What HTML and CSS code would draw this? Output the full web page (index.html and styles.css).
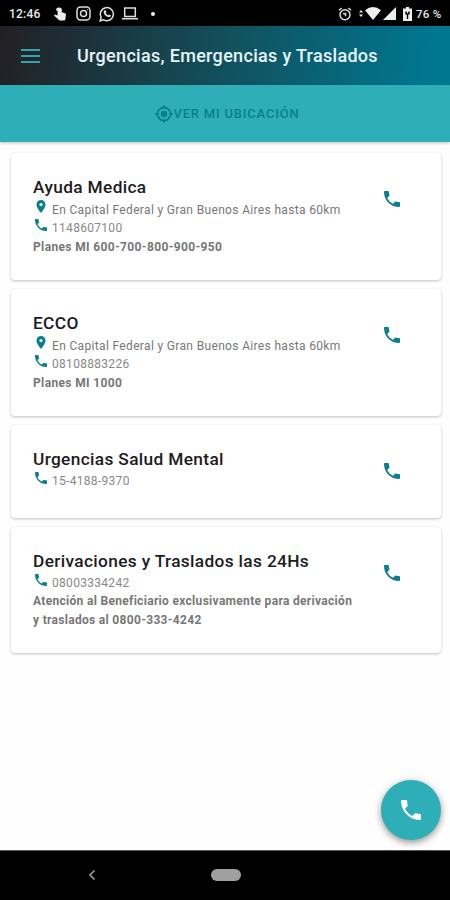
FILE: index.html
```html
<!DOCTYPE html>
<html lang="es">
<head>
  <meta charset="UTF-8">
  <meta name="viewport" content="width=device-width, initial-scale=1">
  <title>Urgencias, Emergencias y Traslados</title>
  <link rel="stylesheet" href="styles.css">
</head>
<body>

<svg class="defs">
  <symbol id="phone" viewBox="3 3 18 18"><path d="M6.620 10.790c1.440 2.830 3.760 5.140 6.590 6.590l2.200-2.200c.27-.27.67-.36 1.020-.24 1.120.37 2.330.57 3.570.57.55 0 1 .45 1 1V20c0 .55-.45 1-1 1-9.390 0-17-7.610-17-17 0-.55.45-1 1-1h3.500c.55 0 1 .45 1 1 0 1.250.2 2.450.57 3.570.11.35.03.74-.25 1.020l-2.200 2.200z"/></symbol>
  <symbol id="pin" viewBox="5 2 14 20"><path fill-rule="evenodd" d="M12 2C8.130 2 5 5.130 5 9c0 5.250 7 13 7 13s7-7.750 7-13c0-3.870-3.130-7-7-7zm0 9.500a2.500 2.500 0 1 1 0-5 2.500 2.500 0 0 1 0 5z"/></symbol>
</svg>

<div class="status">
  <span class="clock">12:46</span>
  <svg class="st-touch" viewBox="0 0 13 15"><path d="M3 4.500a3 3 0 1 1 6 0l-.5 1.500 4 1.600c.5.3.5.8.4 1.400l-.6 4.500q-.2 1-1.300 1H6.500L1 9.500l1-.9 2.500.9V4.500z"/></svg>
  <svg class="st-insta line" viewBox="0 0 15 15"><rect x="1" y="1" width="13" height="13" rx="3.500"/><circle cx="7.500" cy="7.500" r="3"/><path d="M11 3.800h.6"/></svg>
  <svg class="st-wsp line" viewBox="0 0 16 16"><path d="M1.200 14.800l1-3.500a6.500 6.500 0 1 1 2.500 2.500z"/><path class="fill" d="M5.500 4.200l1.200.2.800 1.800-.7 1q.8 1.500 2.300 2.100l.9-.9 1.900.9q-.1 2-2.100 2Q5.200 10.200 4.600 6.300q0-1.300.9-2.100z"/></svg>
  <svg class="st-laptop line" viewBox="0 0 16 13"><path d="M2.700 1h10.600v8.600H2.700zM0 11.800h16"/></svg>
  <i class="dot"></i>
  <svg class="st-alarm line" viewBox="0 0 14 14"><circle cx="7" cy="7.800" r="5"/><path d="M1 3.200L3.600 1M13 3.200L10.400 1M5 6.500l2.500.2v2.600"/></svg>
  <svg class="st-data" viewBox="0 0 5 9"><path d="M2.500 0L5 3.300H0zM2.500 9L0 5.700h5z"/></svg>
  <svg class="st-wifi" viewBox="0 0 16 13"><path d="M0 3.200Q8-3 16 3.200L8 13z"/></svg>
  <svg class="st-signal" viewBox="0 0 13 13"><path d="M13 0v13H0z"/></svg>
  <svg class="st-battery" viewBox="0 0 9 14"><path fill-rule="evenodd" d="M3 0h3v1.500h3V14H0V1.500h3zM2.300 4.500v3h1.500V12h1.400V7.500h1.500v-3H5.200v1.700H3.800V4.500z"/></svg>
  <span class="percent">76 %</span>
</div>

<header class="toolbar">
  <div class="menu"><i></i><i></i><i></i></div>
  <h1>Urgencias, Emergencias y Traslados</h1>
</header>

<div class="location">
  <svg viewBox="0 0 18 18"><circle cx="9" cy="9" r="6.500"/><circle class="center" cx="9" cy="9" r="3.200"/><path d="M9 .3v2M9 15.700v2M.3 9h2M15.700 9h2"/></svg>
  <span>VER MI UBICACIÓN</span>
</div>

<main class="list">
  <div class="card">
    <div class="info">
      <h2>Ayuda Medica</h2>
      <p class="place"><svg class="pin"><use href="#pin"/></svg><span class="address">En Capital Federal y Gran Buenos Aires hasta 60km</span></p>
      <p><svg class="tel"><use href="#phone"/></svg><span class="number">1148607100</span></p>
      <p class="note plans">Planes MI 600-700-800-900-950</p>
    </div>
    <svg class="call"><use href="#phone"/></svg>
  </div>
  <div class="card">
    <div class="info">
      <h2>ECCO</h2>
      <p class="place"><svg class="pin"><use href="#pin"/></svg><span class="address">En Capital Federal y Gran Buenos Aires hasta 60km</span></p>
      <p><svg class="tel"><use href="#phone"/></svg><span class="number">08108883226</span></p>
      <p class="note plans">Planes MI 1000</p>
    </div>
    <svg class="call"><use href="#phone"/></svg>
  </div>
  <div class="card">
    <div class="info">
      <h2>Urgencias Salud Mental</h2>
      <p><svg class="tel"><use href="#phone"/></svg><span class="number">15-4188-9370</span></p>
    </div>
    <svg class="call"><use href="#phone"/></svg>
  </div>
  <div class="card">
    <div class="info">
      <h2>Derivaciones y Traslados las 24Hs</h2>
      <p><svg class="tel"><use href="#phone"/></svg><span class="number">08003334242</span></p>
      <p class="note">Atención al Beneficiario exclusivamente para derivación<br>y traslados al 0800-333-4242</p>
    </div>
    <svg class="call"><use href="#phone"/></svg>
  </div>
</main>

<div class="fab"><svg><use href="#phone"/></svg></div>

<footer class="navbar">
  <svg viewBox="0 0 8 12"><path d="M6.500 1.500L2 6l4.500 4.500"/></svg>
  <i class="home"></i>
</footer>

</body>
</html>
```

FILE: styles.css
```css
* { box-sizing: border-box; }
body { margin: 0; height: 900px; display: flex; flex-direction: column; font-family: Roboto, sans-serif; background: #fefefe; overflow: hidden; }
h1, h2, p { margin: 0; }
svg { display: block; flex: none; }
.defs { display: none; }

.status { height: 26px; background: #000; color: #e8e8e8; display: flex; align-items: center; padding: 1px 8px 0 9px; font-size: 12px; font-weight: 500; }
.status svg { fill: #eee; }
.status .line { fill: none; stroke: #ddd; stroke-width: 1.500; }
.status .fill { fill: #ddd; stroke: none; }
.clock { width: 44px; letter-spacing: .2px; }
.st-touch { width: 13px; height: 15px; }
.st-insta { width: 15px; height: 15px; margin-left: 10px; }
.st-wsp { width: 16px; height: 16px; margin-left: 8px; }
.st-laptop { width: 16px; height: 13px; margin-left: 7px; }
.dot { width: 4px; height: 4px; border-radius: 50%; background: #eee; margin-left: 13px; }
.st-alarm { width: 14px; height: 14px; margin-left: auto; }
.st-data { width: 4px; height: 9px; margin-left: 7px; }
.st-wifi { width: 16px; height: 13px; margin-left: 2px; }
.st-signal { width: 13px; height: 13px; margin-left: 2px; }
.st-battery { width: 9px; height: 14px; margin-left: 7px; }
.percent { width: 26px; margin-left: 4px; white-space: nowrap; font-size: 11.500px; letter-spacing: .3px; }

.toolbar { height: 59px; display: flex; align-items: center; padding-left: 21px; background: linear-gradient(100deg, #231f24 0%, #12505d 50%, #007790 95%); }
.menu { width: 19px; display: flex; flex-direction: column; gap: 4px; }
.menu i { height: 2px; background: #36a3aa; }
.toolbar h1 { margin-left: 37px; font-size: 18px; font-weight: 500; letter-spacing: .31px; color: #e6f4f8; white-space: nowrap; }

.location { height: 57px; display: flex; align-items: center; justify-content: center; gap: 1px; padding-left: 4px; background: #2eaeb6; color: #087f8e; font-size: 13px; font-weight: 500; letter-spacing: .8px; box-shadow: 0 1px 3px rgba(0, 0, 0, .25); }
.location svg { width: 18px; height: 18px; fill: none; stroke: #087f8e; stroke-width: 1.800; }
.location .center { fill: #087f8e; stroke: none; }

.list { flex: 1; display: flex; flex-direction: column; gap: 9px; padding: 11px 9px 0 11px; }
.card { display: flex; justify-content: space-between; min-height: 93px; padding: 22px 41px 23px 22px; background: #fff; border-radius: 4px; box-shadow: 0 1px 3px rgba(0, 0, 0, .25); }
.info h2 { font-size: 17.300px; line-height: 24px; font-weight: 500; letter-spacing: .35px; color: #1c1c1c; white-space: nowrap; }
.info p { display: flex; height: 18px; font-size: 12px; line-height: 21px; color: #777; white-space: nowrap; }
.info .place { height: 19px; line-height: 23px; }
.info svg { fill: #087f8e; }
.pin { width: 10px; height: 13px; margin: 1px 6px 0 3px; }
.tel { width: 12px; height: 12px; margin: 1px 5px 0 2px; }
.address { letter-spacing: .34px; }
.number { color: #888; letter-spacing: .3px; }
.info .note { display: block; height: auto; line-height: 19px; font-weight: 700; letter-spacing: .31px; padding-top: 1px; }
.info .plans { padding-top: 2px; letter-spacing: .36px; }
.call { width: 16px; height: 16px; margin-top: 16px; fill: #087f8e; }

/* floating call button */
.fab { position: absolute; left: 381px; top: 780px; width: 60px; height: 60px; border-radius: 50%; background: #2eaeb6; display: flex; align-items: center; justify-content: center; box-shadow: 0 3px 6px rgba(0, 0, 0, .3), 0 1px 10px rgba(0, 0, 0, .15); }
.fab svg { width: 20px; height: 20px; fill: #fff; }

.navbar { height: 50px; background: #000; border-top: 1px solid #555; display: flex; align-items: center; padding: 0 0 1px 88px; }
.navbar svg { width: 8px; height: 12px; fill: none; stroke: #999; stroke-width: 1.700; }
.home { width: 30px; height: 12px; margin-left: 115px; border-radius: 6px; background: #a0a0a0; }
```
